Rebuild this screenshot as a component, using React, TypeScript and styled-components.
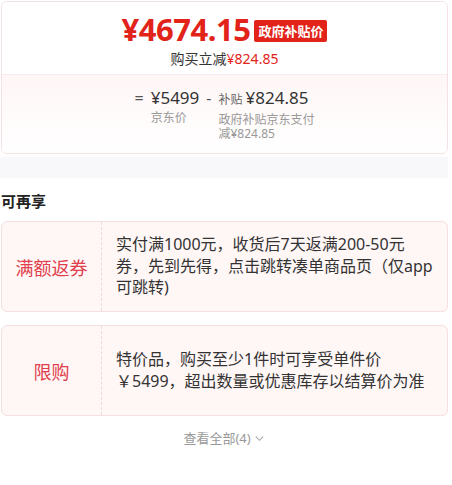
import React from "react";
import styled, { createGlobalStyle } from "styled-components";

const Global = createGlobalStyle`
  html, body { margin: 0; padding: 0; background: #fff; }
  body { font-family: "Noto Sans", "Noto Sans CJK SC", sans-serif; color: #333; }
`;

const Page = styled.div`
  width: 448px;
  display: flex;
  flex-direction: column;
`;

const PriceCard = styled.div`
  margin: 1px 0 0 1px;
  border: 1px solid #f6e1e4;
  border-radius: 6px;
  overflow: hidden;
  display: flex;
  flex-direction: column;
`;

const PriceTop = styled.div`
  background: #fff;
  height: 73px;
  display: flex;
  flex-direction: column;
  align-items: center;
  padding-top: 10px;
  box-sizing: border-box;
  border-bottom: 1px solid #f8ecee;
`;

const PriceLine = styled.div`
  display: flex;
  align-items: center;
  gap: 4px;
  height: 34px;
`;

const BigPrice = styled.span`
  font-size: 31px;
  font-weight: 700;
  color: #e2231a;
  letter-spacing: -0.5px;
  line-height: 34px;
`;

const Badge = styled.span`
  font-family: "Noto Sans CJK SC", sans-serif;
  background: #e2231a;
  color: #fff;
  font-size: 13px;
  font-weight: 700;
  line-height: 22px;
  height: 22px;
  padding: 0 4px;
  border-radius: 2px;
  margin-top: 3px;
`;

const Reduce = styled.div`
  font-size: 14px;
  line-height: 18px;
  color: #333;
  margin-top: 4px;
`;

const Red = styled.span`
  color: #e2231a;
`;

const PriceBottom = styled.div`
  background: linear-gradient(#fff6f6, #fff);
  height: 78px;
  display: flex;
  justify-content: center;
  align-items: flex-start;
  padding-top: 12px;
  box-sizing: border-box;
  gap: 5px;
`;

const Op = styled.span`
  font-size: 16px;
  line-height: 22px;
  color: #555;
  padding: 0 2px;
`;

const Term = styled.div`
  display: flex;
  flex-direction: column;
  align-items: flex-start;
`;

const TermValue = styled.div`
  font-size: 17px;
  line-height: 22px;
  color: #333;
  white-space: nowrap;
  display: flex;
  align-items: baseline;
  gap: 3px;
`;

const SmallTag = styled.span`
  font-size: 12px;
  color: #666;
`;

const TermLabel = styled.div`
  font-size: 12px;
  line-height: 14px;
  color: #999;
  margin-top: 2px;
  max-width: 98px;
`;

const Band = styled.div`
  height: 21px;
  background: #f8f8fb;
  margin-top: 3px;
`;

const Section = styled.div`
  display: flex;
  flex-direction: column;
  padding-top: 13px;
`;

const Title = styled.div`
  font-size: 15px;
  font-weight: 700;
  line-height: 20px;
  color: #222;
  padding-left: 1px;
  margin-bottom: 10px;
`;

const List = styled.div`
  display: flex;
  flex-direction: column;
  gap: 13px;
`;

const Promo = styled.div`
  margin-left: 1px;
  border: 1px solid #f5dfe1;
  border-radius: 6px;
  background: #fff6f6;
  display: flex;
  min-height: 91px;
  box-sizing: border-box;
`;

const PromoLabel = styled.div`
  width: 99px;
  flex: none;
  border-right: 1px dashed #eed6d9;
  display: flex;
  align-items: center;
  justify-content: center;
  font-size: 18px;
  color: #e03e4c;
`;

const PromoText = styled.div`
  flex: 1;
  display: flex;
  align-items: center;
  padding: 12px 13px 12px 14px;
  font-size: 16px;
  line-height: 21.5px;
  color: #333;
`;

const More = styled.div`
  display: flex;
  align-items: center;
  justify-content: center;
  gap: 3px;
  margin-top: 13px;
  font-size: 13px;
  line-height: 18px;
  color: #999;
`;

const promos = [
  {
    label: "满额返券",
    text: "实付满1000元，收货后7天返满200-50元券，先到先得，点击跳转凑单商品页（仅app可跳转)",
  },
  {
    label: "限购",
    text: "特价品，购买至少1件时可享受单件价￥5499，超出数量或优惠库存以结算价为准",
  },
];

export default function App() {
  return (
    <Page>
      <Global />
      <PriceCard>
        <PriceTop>
          <PriceLine>
            <BigPrice>¥4674.15</BigPrice>
            <Badge>政府补贴价</Badge>
          </PriceLine>
          <Reduce>
            购买立减<Red>¥824.85</Red>
          </Reduce>
        </PriceTop>
        <PriceBottom>
          <Op>=</Op>
          <Term>
            <TermValue>¥5499</TermValue>
            <TermLabel>京东价</TermLabel>
          </Term>
          <Op>-</Op>
          <Term>
            <TermValue>
              <SmallTag>补贴</SmallTag>¥824.85
            </TermValue>
            <TermLabel>政府补贴京东支付减¥824.85</TermLabel>
          </Term>
        </PriceBottom>
      </PriceCard>
      <Band />
      <Section>
        <Title>可再享</Title>
        <List>
          {promos.map((p) => (
            <Promo key={p.label}>
              <PromoLabel>{p.label}</PromoLabel>
              <PromoText>{p.text}</PromoText>
            </Promo>
          ))}
        </List>
        <More>
          查看全部(4)
          <svg width="11" height="11" viewBox="0 0 12 12" fill="none">
            <path d="M2 4l4 4 4-4" stroke="#aaa" strokeWidth="1.2" />
          </svg>
        </More>
      </Section>
    </Page>
  );
}
